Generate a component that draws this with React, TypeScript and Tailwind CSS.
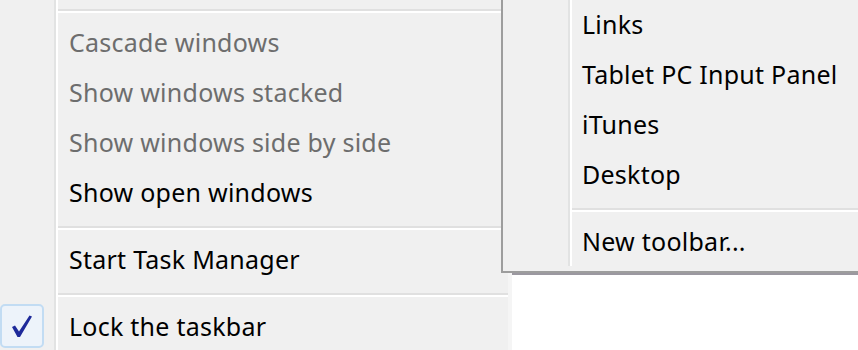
import React from "react";

const font = { fontFamily: '"Noto Sans", "Open Sans", sans-serif' };

function MainRow({ text, disabled, checked }: { text: string; disabled?: boolean; checked?: boolean }) {
  return (
    <div className="flex h-[50px] items-center">
      <div className="flex h-full w-[58px] shrink-0 items-center">
        {checked && (
          <div className="flex h-[44px] w-[44px] items-center justify-center rounded-[5px] border-2 border-[#c2dcf3] bg-[#edf3fa]">
            <svg width="22" height="24" viewBox="0 0 22 24">
              <path d="M1 13 L4 11.5 L8 17.5 L18.5 1.5 L21 2.5 L9 23 L6.5 23 Z" fill="#1e2a9a" />
            </svg>
          </div>
        )}
      </div>
      <div className={`pl-[11px] text-[25px] leading-none tracking-[0.25px] whitespace-nowrap ${disabled ? "text-[#6d6d6d]" : "text-black"}`}>
        {text}
      </div>
    </div>
  );
}

function MainSep() {
  return (
    <div className="pt-[9px] pb-[4px]">
      <div className="ml-[58px] h-[2px] bg-[#e0e0e0]" />
      <div className="ml-[58px] h-[2px] bg-white" />
    </div>
  );
}

function SubRow({ text }: { text: string }) {
  return (
    <div className="flex h-[50px] items-center pl-[79px] text-[25px] leading-none tracking-[0.25px] whitespace-nowrap text-black">
      {text}
    </div>
  );
}

export default function App() {
  return (
    <div className="relative h-[350px] w-[858px] overflow-hidden bg-white" style={font}>
      <div className="h-full w-[512px] border-r-4 border-[#f5f5f5] bg-[#f0f0f0] bg-[linear-gradient(to_right,#f0f0f0_54px,#e2e3e3_54px,#e2e3e3_56px,#ffffff_56px,#ffffff_58px,#f0f0f0_58px)]">
        <div className="h-[9px]" />
        <div className="pb-[4px]">
          <div className="ml-[58px] h-[2px] bg-[#e0e0e0]" />
          <div className="ml-[58px] h-[2px] bg-white" />
        </div>
        <MainRow text="Cascade windows" disabled />
        <MainRow text="Show windows stacked" disabled />
        <MainRow text="Show windows side by side" disabled />
        <MainRow text="Show open windows" />
        <MainSep />
        <MainRow text="Start Task Manager" />
        <MainSep />
        <MainRow text="Lock the taskbar" checked />
      </div>

      <div className="absolute left-[501px] top-[-3px] w-[380px] border-2 border-[#9d9d9d] bg-[#f0f0f0] pb-[5px] shadow-[11px_2px_0_#9b98a0]">
        <div className="bg-[linear-gradient(to_right,#f0f0f0_65px,#e2e3e3_65px,#e2e3e3_67px,#ffffff_67px,#ffffff_69px,#f0f0f0_69px)]">
          <SubRow text="Links" />
          <SubRow text="Tablet PC Input Panel" />
          <SubRow text="iTunes" />
          <SubRow text="Desktop" />
          <div className="pt-[9px] pb-[4px]">
            <div className="ml-[69px] h-[2px] bg-[#e0e0e0]" />
            <div className="ml-[69px] h-[2px] bg-white" />
          </div>
          <SubRow text="New toolbar..." />
        </div>
      </div>
    </div>
  );
}
